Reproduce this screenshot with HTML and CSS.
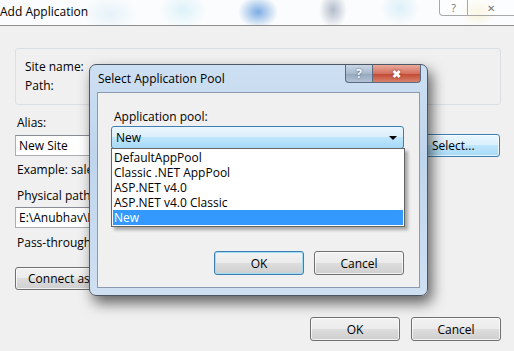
FILE: index.html
```html
<!DOCTYPE html>
<html lang="en">
<head>
  <meta charset="UTF-8">
  <title>Add Application</title>
  <link rel="stylesheet" href="styles.css">
</head>
<body>

  <div class="window">
    <div class="titlebar">
      <span class="title">Add Application</span>
      <div class="caption-btns">
        <span class="cap-btn cap-help">?</span>
        <span class="cap-btn cap-close">&#10005;</span>
      </div>
    </div>

    <div class="content">
      <div class="group">
        <div class="line">Site name:</div>
        <div class="line">Path:</div>
      </div>

      <div class="label label-alias">Alias:</div>
      <div class="field-row">
        <div class="textbox textbox-alias">New Site</div>
        <button class="btn btn-select">Select...</button>
      </div>
      <div class="label label-example">Example: sales</div>

      <div class="label label-physical">Physical path:</div>
      <div class="textbox textbox-path">E:\Anubhav\P</div>
      <div class="label label-pass">Pass-through</div>

      <button class="btn btn-connect">Connect as...</button>

      <div class="footer">
        <button class="btn">OK</button>
        <button class="btn">Cancel</button>
      </div>
    </div>

    <!-- modal dialog on top -->
    <div class="dialog">
      <div class="dialog-title">
        <span>Select Application Pool</span>
        <div class="dialog-caps">
          <span class="dcap dcap-help">?</span>
          <span class="dcap dcap-close">&#10006;</span>
        </div>
      </div>
      <div class="dialog-body">
        <div class="label pool-label">Application pool:</div>
        <div class="combo">
          <span>New</span>
          <span class="arrow"></span>
        </div>
        <ul class="dropdown">
          <li>DefaultAppPool</li>
          <li>Classic .NET AppPool</li>
          <li>ASP.NET v4.0</li>
          <li>ASP.NET v4.0 Classic</li>
          <li class="selected">New</li>
        </ul>
        <div class="dialog-footer">
          <button class="btn btn-default">OK</button>
          <button class="btn">Cancel</button>
        </div>
      </div>
    </div>
  </div>

</body>
</html>
```

FILE: styles.css
```css
* {
  box-sizing: border-box;
}
body {
  margin: 0;
  font-family: "Open Sans", "Noto Sans", sans-serif;
  font-size: 12px;
  color: #000;
}
.window {
  position: relative;
  width: 514px;
  height: 351px;
  overflow: hidden;
  background: #f0f0f0;
}
.titlebar {
  height: 26px;
  display: flex;
  align-items: flex-start;
  border-bottom: 1px solid #8e8e8e;
  background:
    radial-gradient(ellipse 20px 16px at 258px 12px, rgba(40,120,210,0.6), transparent),
    radial-gradient(ellipse 14px 18px at 333px 10px, rgba(90,110,140,0.45), transparent),
    radial-gradient(ellipse 24px 18px at 183px 10px, rgba(150,220,240,0.3), transparent),
    radial-gradient(ellipse 28px 18px at 110px 14px, rgba(180,220,240,0.3), transparent),
    radial-gradient(ellipse 20px 18px at 400px 8px, rgba(150,210,240,0.3), transparent),
    radial-gradient(ellipse 18px 14px at 478px 12px, rgba(240,220,120,0.3), transparent),
    #fbfcfd;
}
.title {
  margin-top: 3px;
}
.caption-btns {
  margin-left: auto;
  display: flex;
}
.cap-btn {
  height: 16px;
  display: flex;
  align-items: center;
  justify-content: center;
  border: 1px solid #a8a8a8;
  border-top: none;
  color: #777;
  font-size: 11px;
  line-height: 14px;
  background: rgba(255,255,255,0.4);
}
.cap-help {
  width: 29px;
  border-radius: 0 0 0 4px;
}
.cap-close {
  width: 46px;
  border-left: none;
  border-right: none;
  font-size: 10px;
}
.content {
  padding: 22px 13px 0 15px;
}
.group {
  height: 57px;
  border: 1px solid #d9dfe4;
  border-radius: 3px;
  padding: 10px 0 0 9px;
}
.line {
  height: 15px;
  line-height: 15px;
  margin-bottom: 4px;
}
.label {
  height: 15px;
  line-height: 15px;
}
.label-alias {
  margin: 10px 0 0 2px;
}
.field-row {
  display: flex;
  align-items: center;
  margin-top: 4px;
  height: 23px;
}
.textbox {
  height: 21px;
  line-height: 19px;
  padding-left: 3px;
  background: #fff;
  border: 1px solid #abadb3;
  border-top-color: #888b94;
}
.textbox-alias {
  width: 400px;
}
.label-example {
  margin: 5px 0 0 2px;
}
.label-physical {
  margin: 11px 0 0 2px;
}
.textbox-path {
  margin-top: 4px;
  width: 400px;
}
.label-pass {
  margin: 7px 0 0 2px;
}
.btn {
  height: 24px;
  width: 90px;
  font-family: inherit;
  font-size: 12px;
  color: #000;
  border: 1px solid #707070;
  border-radius: 3px;
  background: linear-gradient(#f2f2f2 0%, #ebebeb 49%, #dddddd 50%, #cfcfcf 100%);
  box-shadow: inset 0 0 0 1px rgba(255,255,255,0.7);
  padding: 0;
}
.btn-select {
  margin-left: 10px;
  width: 75px;
  height: 23px;
  text-align: left;
  padding-left: 6px;
  border-color: #3c7fb1;
  background: linear-gradient(#eaf6fd 0%, #d9f0fc 49%, #bee6fd 50%, #a7d9f5 100%);
}
.btn-connect {
  display: block;
  margin-top: 17px;
  width: 100px;
  height: 23px;
  text-align: left;
  padding-left: 12px;
}
.footer {
  display: flex;
  justify-content: flex-end;
  gap: 11px;
  margin-top: 27px;
}

/* modal */
.dialog {
  position: absolute;
  left: 89px;
  top: 64px;
  width: 339px;
  height: 232px;
  border: 1px solid #4d5866;
  border-radius: 7px;
  padding: 0 7px 7px 7px;
  background: linear-gradient(180deg, #cddff2 0%, #bfd5ed 40%, #cfe0f1 100%);
  box-shadow: 4px 7px 14px rgba(0,0,0,0.6);
  display: flex;
  flex-direction: column;
}
.dialog-title {
  height: 27px;
  display: flex;
  align-items: flex-start;
}
.dialog-title > span {
  margin-top: 5px;
  padding-left: 1px;
}
.dialog-caps {
  margin-left: auto;
  display: flex;
  margin-right: -1px;
}
.dcap {
  height: 18px;
  display: flex;
  align-items: center;
  justify-content: center;
  color: #fff;
  font-weight: bold;
  border: 1px solid #5b6b80;
  border-top: none;
}
.dcap-help {
  width: 28px;
  border-radius: 0 0 0 4px;
  background: linear-gradient(#c9d6e4, #a9b9cc 50%, #93a6bd 51%, #b3c3d6);
  color: #f4f7fb;
  text-shadow: 0 0 2px #42536a;
}
.dcap-close {
  width: 48px;
  border-left: none;
  border-radius: 0 0 4px 0;
  background: linear-gradient(#e9a99c, #d4705f 50%, #c2452f 51%, #d8836c);
  font-size: 11px;
  text-shadow: 0 0 2px #6b1a0e;
}
.dialog-body {
  position: relative;
  flex: 1;
  background: #f0f0f0;
  border: 1px solid #8a9bb1;
  padding: 16px 15px 0 13px;
}
.pool-label {
  margin-left: 3px;
}
.combo {
  margin-top: 2px;
  height: 23px;
  display: flex;
  align-items: center;
  padding: 0 6px 0 4px;
  border: 1px solid #3c7fb1;
  border-radius: 3px;
  background: linear-gradient(#ecf6fd 0%, #dbeefb 49%, #bee6fd 50%, #a7d9f5 100%);
}
.arrow {
  margin-left: auto;
  width: 0;
  height: 0;
  border-left: 4px solid transparent;
  border-right: 4px solid transparent;
  border-top: 4px solid #000;
}
.dropdown {
  position: absolute;
  left: 13px;
  top: 55px;
  width: 294px;
  margin: 0;
  padding: 1px;
  list-style: none;
  background: #fff;
  border: 1px solid #646464;
  box-shadow: 3px 3px 3px rgba(0,0,0,0.3);
}
.dropdown li {
  height: 15px;
  line-height: 15px;
  padding-left: 1px;
}
.dropdown .selected {
  background: #3399ff;
  color: #fff;
}
.dialog-footer {
  display: flex;
  justify-content: flex-end;
  gap: 10px;
  margin-top: 102px;
}
.btn-default {
  border-color: #3c7fb1;
  box-shadow: inset 0 0 0 1px #9fdcf6;
}
```
